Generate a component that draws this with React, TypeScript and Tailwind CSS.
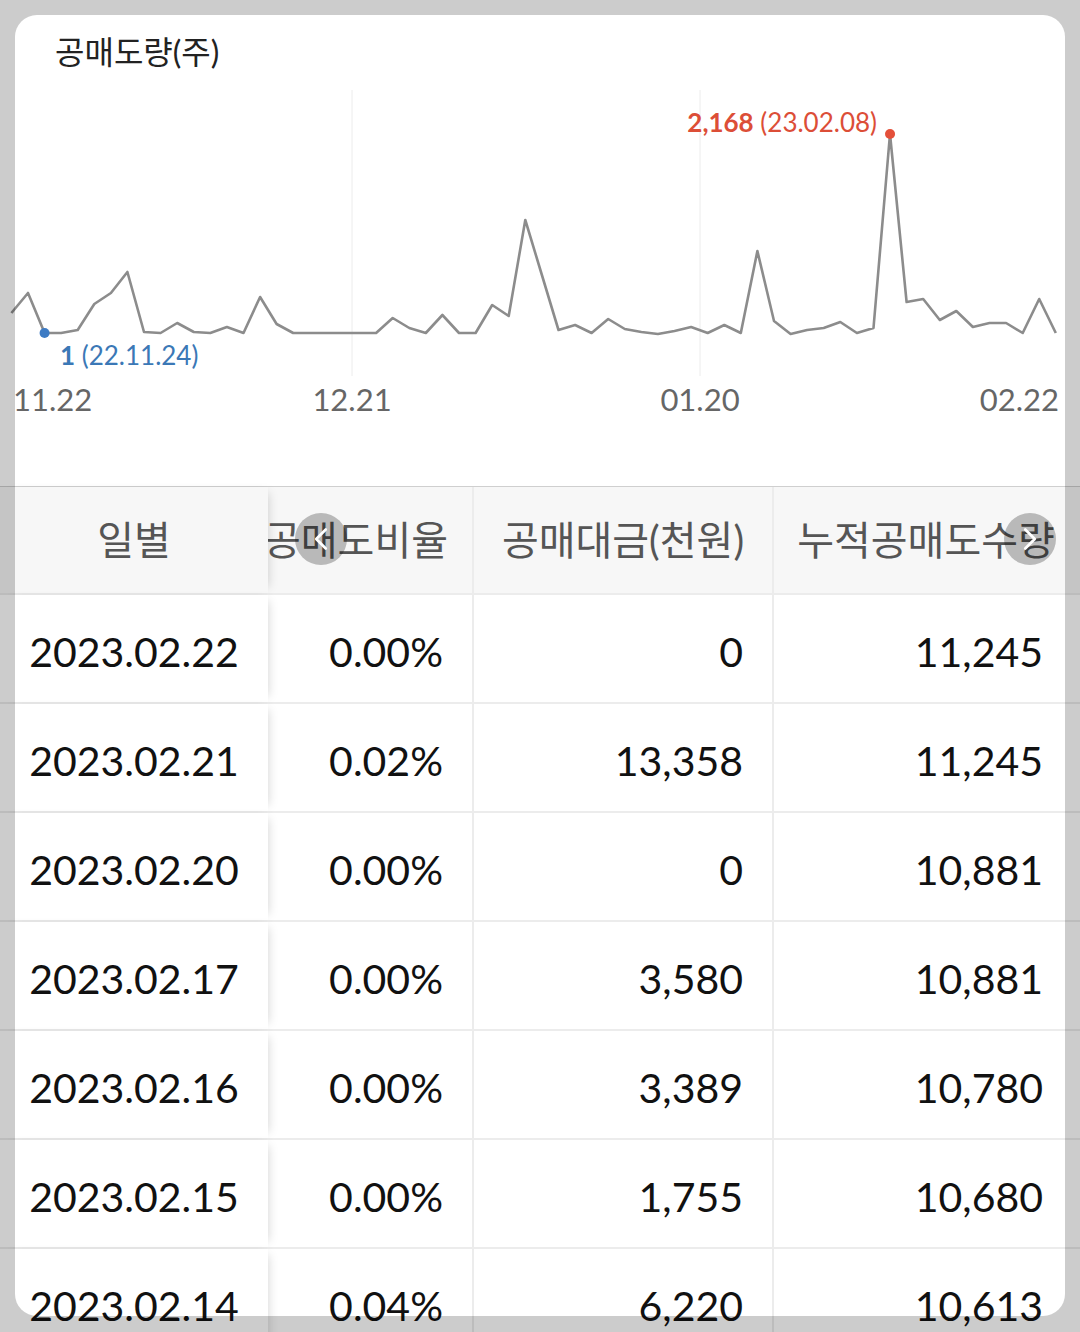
import { ChevronLeft, ChevronRight } from "lucide-react";

const series = [
  313, 293, 333, 333, 330, 304, 293, 272, 332, 333, 323, 332, 333, 327, 333, 297,
  324, 333, 333, 333, 333, 333, 333, 318, 328, 333, 315, 333, 333, 305, 316, 220,
  275, 330, 325, 333, 319, 329, 332, 334, 331, 327, 333, 325, 333, 251, 321, 334,
  330, 328, 322, 333, 328, 134, 302, 299, 320, 311, 327, 323, 323, 333, 299, 333,
];

const X0 = 11.4;
const STEP = 16.578;

const rows = [
  ["2023.02.22", "0.00%", "0", "11,245"],
  ["2023.02.21", "0.02%", "13,358", "11,245"],
  ["2023.02.20", "0.00%", "0", "10,881"],
  ["2023.02.17", "0.00%", "3,580", "10,881"],
  ["2023.02.16", "0.00%", "3,389", "10,780"],
  ["2023.02.15", "0.00%", "1,755", "10,680"],
  ["2023.02.14", "0.04%", "6,220", "10,613"],
];

function Chart() {
  const points = series.map((y, i) => `${(X0 + i * STEP).toFixed(1)},${y}`).join(" ");
  return (
    <section className="relative h-[486px]">
      <h2 className="pl-[55px] pt-[33px] text-[32px] leading-[38px] text-[#222]">공매도량(주)</h2>

      <svg className="absolute inset-0" width="1080" height="486" viewBox="0 0 1080 486">
        <line x1="352" y1="90" x2="352" y2="376" stroke="#ececec" strokeWidth="1" />
        <line x1="700" y1="90" x2="700" y2="376" stroke="#ececec" strokeWidth="1" />
        <polyline points={points} fill="none" stroke="#8c8c8c" strokeWidth="2.6" strokeLinejoin="round" />
        <circle cx={X0 + 2 * STEP} cy="333" r="5" fill="#3d7bc4" />
        <circle cx={X0 + 53 * STEP} cy="134" r="5" fill="#e4503a" />
      </svg>

      {/* min / max labels */}
      <span className="absolute left-[60px] top-[340px] text-[26px] leading-[30px] text-[#3b78b6]">
        <b>1</b> (22.11.24)
      </span>
      <span className="absolute right-[203px] top-[107px] text-[26px] leading-[30px] text-[#dc4e37]">
        <b>2,168</b> (23.02.08)
      </span>

      {/* x axis */}
      <span className="absolute left-[13px] top-[381px] text-[31px] leading-[36px] text-[#666]">11.22</span>
      <span className="absolute left-[352px] top-[381px] -translate-x-1/2 text-[31px] leading-[36px] text-[#666]">12.21</span>
      <span className="absolute left-[700px] top-[381px] -translate-x-1/2 text-[31px] leading-[36px] text-[#666]">01.20</span>
      <span className="absolute right-[21px] top-[381px] text-[31px] leading-[36px] text-[#666]">02.22</span>
    </section>
  );
}

function Table() {
  return (
    <div className="border-t border-[#cfcfcf]">
      <div className="relative flex h-[108px] border-b-2 border-[#ececec] bg-[#f7f7f7] text-[40px] text-[#555]">
        <div className="relative z-10 flex w-[268px] shrink-0 items-center justify-center bg-[#f7f7f7] shadow-[6px_0_10px_-6px_rgba(0,0,0,0.18)]">
          일별
        </div>
        <div className="-ml-[28px] flex w-[232px] shrink-0 items-center justify-center whitespace-nowrap">공매도비율</div>
        <div className="flex w-[300px] shrink-0 items-center justify-center whitespace-nowrap border-l-2 border-[#ececec]">
          공매대금(천원)
        </div>
        <div className="flex w-[306px] shrink-0 items-center justify-center whitespace-nowrap border-l-2 border-[#ececec]">
          누적공매도수량
        </div>

        <button className="absolute left-[295px] top-[26px] z-20 flex h-[52px] w-[52px] items-center justify-center rounded-full bg-black/25 text-white">
          <ChevronLeft size={38} strokeWidth={1.7} />
        </button>
        <button className="absolute left-[1004px] top-[26px] z-20 flex h-[52px] w-[52px] items-center justify-center rounded-full bg-black/25 text-white">
          <ChevronRight size={38} strokeWidth={1.7} />
        </button>
      </div>

      {rows.map((r) => (
        <div key={r[0]} className="flex h-[109px] border-b-2 border-[#ececec] text-[41px] text-[#111]">
          <div className="relative z-10 flex w-[268px] shrink-0 items-center justify-center bg-white pt-[6px] shadow-[6px_0_10px_-6px_rgba(0,0,0,0.18)]">
            {r[0]}
          </div>
          <div className="-ml-[28px] flex w-[232px] shrink-0 items-center justify-end pr-[29px] pt-[6px]">{r[1]}</div>
          <div className="flex w-[300px] shrink-0 items-center justify-end border-l-2 border-[#ececec] pr-[29px] pt-[6px]">
            {r[2]}
          </div>
          <div className="flex w-[306px] shrink-0 items-center justify-end border-l-2 border-[#ececec] pr-[35px] pt-[6px]">
            {r[3]}
          </div>
        </div>
      ))}
    </div>
  );
}

export default function App() {
  return (
    <div className="relative h-[1332px] w-[1080px] overflow-hidden bg-white font-[Lato,'Noto_Sans_CJK_KR',sans-serif]">
      <Chart />
      <Table />

      {/* dimmed backdrop with the highlighted card cut out */}
      <div className="pointer-events-none absolute left-[15px] top-[15px] z-30 h-[1301px] w-[1050px] rounded-[22px] shadow-[0_0_0_2000px_rgba(0,0,0,0.2)]" />
    </div>
  );
}
